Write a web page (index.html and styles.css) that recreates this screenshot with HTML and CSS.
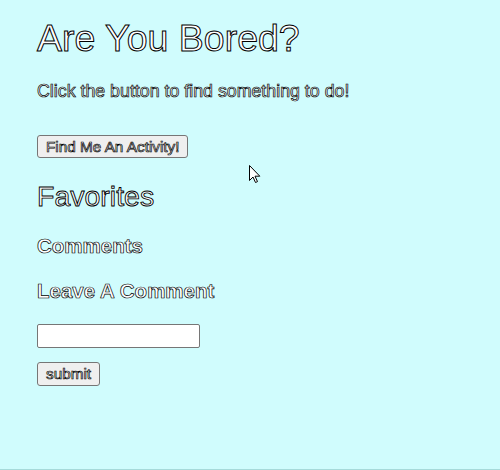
FILE: index.html
```html
<!DOCTYPE html>
<html lang="en">
<head>
<meta charset="utf-8">
<title>Are You Bored?</title>
<link rel="stylesheet" href="styles.css">
</head>
<body>
  <h1 class="title">Are You Bored?</h1>
  <p class="intro">Click the button to find something to do!</p>
  <div class="actions">
    <button class="btn btn-find" type="button">Find Me An Activity!</button>
  </div>
  <h2 class="favorites">Favorites</h2>
  <h3 class="section">Comments</h3>
  <h3 class="section section-leave">Leave A Comment</h3>
  <form class="comment-form">
    <input class="comment-input" type="text">
    <button class="btn btn-submit" type="button">submit</button>
  </form>
  <svg class="cursor" width="12" height="19" viewBox="0 0 12 19" aria-hidden="true">
    <path d="M0.5 0.5 L0.5 15.5 L4 12 L6.5 17.5 L8.5 16.6 L6 11.2 L10.8 11.2 Z" fill="#fff" stroke="#000" stroke-width="1" stroke-linejoin="miter"/>
  </svg>
</body>
</html>
```
FILE: styles.css
```css
html {
  min-height: 100%;
  background: #d0fcfd;
  box-shadow: inset 0 -1px 0 #a6dada;
}
body {
  margin: 0;
  padding: 17px 0 0 37px;
  font-family: "Liberation Sans", Arial, sans-serif;
  color: #fff;
  -webkit-text-stroke: 0.7px #000;
}
.title {
  margin: 0;
  font-size: 37.5px;
  line-height: 42px;
  font-weight: normal;
  -webkit-text-stroke: 1px #000;
}
.intro {
  margin: 22px 0 0;
  font-size: 17.8px;
  line-height: 21px;
}
.actions {
  margin-top: 33px;
}
.btn {
  display: block;
  box-sizing: border-box;
  font-family: "Liberation Sans", Arial, sans-serif;
  font-size: 15.3px;
  color: #fff;
  -webkit-text-stroke: 0.7px #000;
  background: #efefef;
  border: 1px solid #767676;
  border-radius: 3px;
  padding: 0 8px;
  margin: 0;
}
.btn-find {
  height: 23px;
}
.favorites {
  margin: 22px 0 0;
  font-size: 28.5px;
  line-height: 32px;
  font-weight: normal;
  -webkit-text-stroke: 0.9px #000;
}
.section {
  margin: 22px 0 0;
  font-size: 20.5px;
  line-height: 24px;
  font-weight: bold;
}
.section-leave {
  margin-top: 21px;
}
.comment-form {
  margin: 21px 0 0;
  display: flex;
  flex-direction: column;
  align-items: flex-start;
  gap: 14px;
}
.comment-input {
  box-sizing: border-box;
  width: 163px;
  height: 24px;
  margin: 0;
  border: 1px solid #767676;
  border-radius: 2px;
  background: #fff;
}
.btn-submit {
  height: 24px;
}
.cursor {
  position: absolute;
  left: 249px;
  top: 165px;
}
```
